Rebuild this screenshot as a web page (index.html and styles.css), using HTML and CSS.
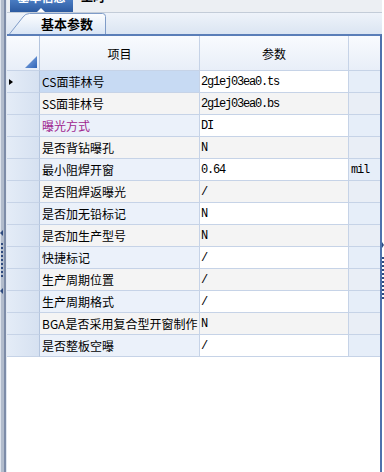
FILE: index.html
```html
<!DOCTYPE html>
<html lang="zh">
<head>
    <meta charset="UTF-8">
    <meta name="viewport" content="width=device-width, initial-scale=1.0">
    <title>基本参数</title>
    <link rel="stylesheet" href="styles.css">
</head>
<body>
    <div class="app">
        <!-- left splitter -->
        <div class="split-left">
            <span class="grip-arrow left top"></span>
            <span class="grip-dots"></span>
            <span class="grip-arrow left bottom"></span>
        </div>

        <div class="main">
            <!-- outer tabs (scrolled, only bottom visible) -->
            <div class="topbar">
                <div class="toptab active"><span>基本信息</span><i class="caret"></i></div>
                <div class="toptab"><span>工时</span></div>
            </div>

            <!-- inner tabs -->
            <div class="tabstrip">
                <div class="tab">
                    <svg class="tab-bg" width="97" height="21" viewBox="0 0 97 21">
                        <defs>
                            <linearGradient id="tabFill" x1="0" y1="0" x2="0" y2="1">
                                <stop offset="0" stop-color="#fdfeff"/>
                                <stop offset="1" stop-color="#d9e5f5"/>
                            </linearGradient>
                        </defs>
                        <path d="M0.5,21 L14,4 Q16.5,0.5 20.5,0.5 L93.5,0.5 Q96.5,0.5 96.5,3.5 L96.5,21" fill="url(#tabFill)" stroke="#7f9cc8"/>
                    </svg>
                    <span class="tab-label">基本参数</span>
                </div>
            </div>

            <!-- parameter grid -->
            <div class="panel">
                <div class="grid">
                    <div class="row head">
                        <div class="cell ind"><svg class="corner" width="12" height="12" viewBox="0 0 12 12"><defs><linearGradient id="cg" x1="0" y1="0" x2="1" y2="1"><stop offset="0" stop-color="#8fb2e6"/><stop offset="1" stop-color="#2e64b8"/></linearGradient></defs><path d="M12,0 L12,12 L0,12 Z" fill="url(#cg)"/></svg></div>
                        <div class="cell item">项目</div>
                        <div class="cell val">参数</div>
                        <div class="cell unit"></div>
                    </div>

                    <div class="row current">
                        <div class="cell ind"><span class="pointer"></span></div>
                        <div class="cell item">CS面菲林号</div>
                        <div class="cell val">2g1ej03ea0.ts</div>
                        <div class="cell unit"></div>
                    </div>
                    <div class="row alt">
                        <div class="cell ind"></div>
                        <div class="cell item">SS面菲林号</div>
                        <div class="cell val">2g1ej03ea0.bs</div>
                        <div class="cell unit"></div>
                    </div>
                    <div class="row">
                        <div class="cell ind"></div>
                        <div class="cell item purple">曝光方式</div>
                        <div class="cell val">DI</div>
                        <div class="cell unit"></div>
                    </div>
                    <div class="row alt">
                        <div class="cell ind"></div>
                        <div class="cell item">是否背钻曝孔</div>
                        <div class="cell val">N</div>
                        <div class="cell unit"></div>
                    </div>
                    <div class="row">
                        <div class="cell ind"></div>
                        <div class="cell item">最小阻焊开窗</div>
                        <div class="cell val">0.64</div>
                        <div class="cell unit">mil</div>
                    </div>
                    <div class="row alt">
                        <div class="cell ind"></div>
                        <div class="cell item">是否阻焊返曝光</div>
                        <div class="cell val">/</div>
                        <div class="cell unit"></div>
                    </div>
                    <div class="row">
                        <div class="cell ind"></div>
                        <div class="cell item">是否加无铅标记</div>
                        <div class="cell val">N</div>
                        <div class="cell unit"></div>
                    </div>
                    <div class="row alt">
                        <div class="cell ind"></div>
                        <div class="cell item">是否加生产型号</div>
                        <div class="cell val">N</div>
                        <div class="cell unit"></div>
                    </div>
                    <div class="row">
                        <div class="cell ind"></div>
                        <div class="cell item">快捷标记</div>
                        <div class="cell val">/</div>
                        <div class="cell unit"></div>
                    </div>
                    <div class="row alt">
                        <div class="cell ind"></div>
                        <div class="cell item">生产周期位置</div>
                        <div class="cell val">/</div>
                        <div class="cell unit"></div>
                    </div>
                    <div class="row">
                        <div class="cell ind"></div>
                        <div class="cell item">生产周期格式</div>
                        <div class="cell val">/</div>
                        <div class="cell unit"></div>
                    </div>
                    <div class="row alt">
                        <div class="cell ind"></div>
                        <div class="cell item">BGA是否采用复合型开窗制作</div>
                        <div class="cell val">N</div>
                        <div class="cell unit"></div>
                    </div>
                    <div class="row">
                        <div class="cell ind"></div>
                        <div class="cell item">是否整板空曝</div>
                        <div class="cell val">/</div>
                        <div class="cell unit"></div>
                    </div>
                </div>
            </div>
        </div>

        <!-- right splitter -->
        <div class="split-right">
            <span class="grip-arrow right top"></span>
            <span class="grip-dots"></span>
        </div>
    </div>
</body>
</html>
```

FILE: styles.css
```css
* {
    box-sizing: border-box;
}

body {
    margin: 0;
    width: 384px;
    height: 472px;
    overflow: hidden;
    background: #fff;
    color: #000;
    font-family: "Noto Sans CJK SC", sans-serif;
    font-size: 12px;
}

.app {
    display: flex;
    height: 472px;
}

/* splitters */
.split-left {
    position: relative;
    flex: none;
    width: 7px;
    background: linear-gradient(to right, #dde3ec 0 1px, #b2bccc 1px 4px, #7d8ca8 4px 6px, #dfe6f0 6px 7px);
}

.split-right {
    position: relative;
    flex: none;
    width: 2px;
    background: #fff;
}

.grip-arrow {
    position: absolute;
    width: 0;
    height: 0;
    border-top: 3px solid transparent;
    border-bottom: 3px solid transparent;
}

.split-left .grip-arrow {
    left: 0;
    border-right: 3px solid #2e4a7e;
}

.split-left .grip-arrow.top {
    top: 230px;
}

.split-left .grip-arrow.bottom {
    top: 288px;
}

.split-left .grip-dots {
    position: absolute;
    left: 1px;
    top: 243px;
    width: 2px;
    height: 36px;
    background: repeating-linear-gradient(to bottom, #2e4a7e 0 2px, transparent 2px 4px);
}

.split-right .grip-arrow {
    left: 0;
    top: 242px;
    border-left: 2px solid #2e4a7e;
}

.split-right .grip-dots {
    position: absolute;
    left: 0;
    top: 257px;
    width: 2px;
    height: 44px;
    background: repeating-linear-gradient(to bottom, #2e4a7e 0 2px, transparent 2px 4px);
}

.main {
    flex: 1;
    display: flex;
    flex-direction: column;
    min-width: 0;
}

/* outer tabs */
.topbar {
    display: flex;
    height: 13px;
    padding-left: 3px;
    background: #eceff3;
    border-bottom: 1px solid #c3ccd8;
    overflow: hidden;
}

.toptab {
    position: relative;
    width: 68px;
    font-weight: bold;
    overflow: hidden;
}

.toptab span {
    display: block;
    margin-top: -11px;
    line-height: 16px;
    padding-left: 3px;
}

.toptab.active {
    width: 63px;
    margin-right: 5px;
    color: #fff;
    background: linear-gradient(#4a7cc2, #2c5aa0);
    text-align: center;
}

.toptab.active span {
    padding-left: 0;
}

.caret {
    position: absolute;
    left: 27px;
    bottom: 0;
    width: 0;
    height: 0;
    border-left: 4px solid transparent;
    border-right: 4px solid transparent;
    border-bottom: 4px solid #fff;
}

/* inner tabs */
.tabstrip {
    display: flex;
    align-items: flex-end;
    height: 21px;
    padding-left: 2px;
    background: linear-gradient(#eef3fa, #dbe5f2);
}

.tab {
    position: relative;
    width: 97px;
    height: 21px;
    padding-left: 32px;
    font-size: 13px;
    font-weight: bold;
    line-height: 21px;
}

.tab-bg {
    position: absolute;
    left: 0;
    top: 0;
}

.tab-label {
    position: relative;
}

/* grid */
.panel {
    flex: 1;
    border-top: 2px solid #5a7eb8;
    border-right: 2px solid #4f72ad;
    background: #fff;
}

.row {
    display: grid;
    grid-template-columns: 33px 160px 149px 31px;
    height: 22px;
}

.cell {
    display: flex;
    align-items: center;
    border-right: 1px solid #c6d3e7;
    border-bottom: 1px solid #c6d3e7;
    padding-left: 2px;
    white-space: nowrap;
    overflow: hidden;
}

.cell.unit {
    border-right: none;
    background: #e6eef9;
    font-family: "Liberation Mono", monospace;
    letter-spacing: -1.2px;
}

.cell.ind {
    background: linear-gradient(to right, #e4ecf7, #d6e1f1);
    border-right-color: #b4c5de;
}

.cell.item {
    background: #ebf1fa;
}

.cell.val {
    background: #fff;
    font-family: "Liberation Mono", monospace;
    letter-spacing: -1.2px;
    padding-left: 1px;
}

.row.alt .cell.item,
.row.alt .cell.val {
    background: #f4f4f4;
}

.row.alt .cell.unit {
    background: #e9eef6;
}

.row.current .cell.item {
    background: #c7daf3;
}

.purple {
    color: #a0268f;
}

.pointer {
    width: 0;
    height: 0;
    border-top: 3px solid transparent;
    border-bottom: 3px solid transparent;
    border-left: 4px solid #000;
}

.row.head {
    height: 35px;
}

.row.head .cell {
    justify-content: center;
    padding-left: 0;
    background: linear-gradient(#f9fbfe, #e8eef8);
    font-family: "Noto Sans CJK SC", sans-serif;
    letter-spacing: 0;
}

.row.head .cell.ind {
    justify-content: flex-end;
    align-items: flex-end;
    padding: 0 2px 2px 0;
}
```
